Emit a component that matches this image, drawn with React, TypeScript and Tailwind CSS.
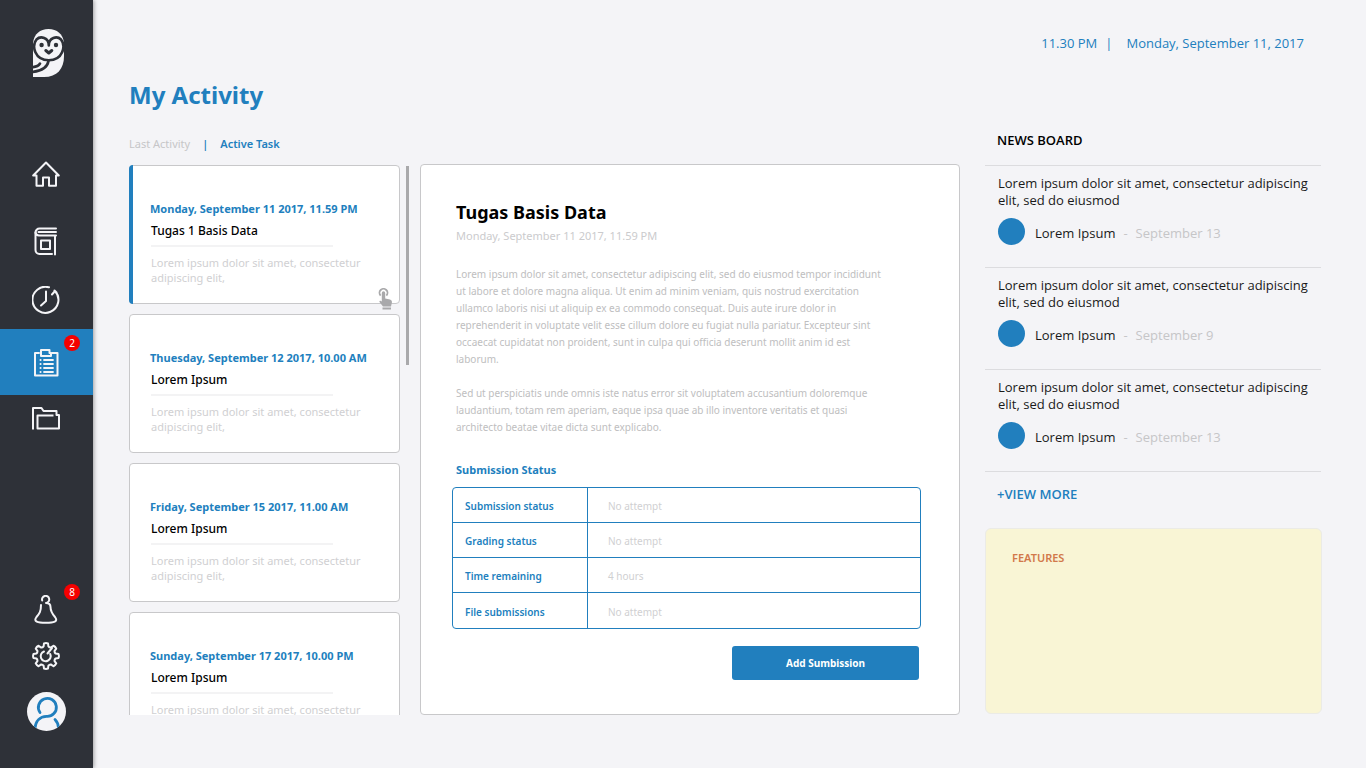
import React from "react";

const strokeProps = {
  fill: "none",
  stroke: "currentColor",
  strokeWidth: 2,
  strokeLinecap: "round" as const,
  strokeLinejoin: "round" as const,
};

function OwlLogo() {
  return (
    <svg width="31" height="48" viewBox="0 0 31 48" aria-hidden="true">
      <path d="M0 14C1 5 7 0 15.500 0S30 5 31 14V27C31 40 24 48 11 48H0Z" fill="#f4f4f7" />
      <g fill="none" stroke="#2e3138" strokeWidth="2.600" strokeLinecap="round" strokeLinejoin="round">
        <path d="M15.800 16.500C15.800 8.500 7.500 6.500 3.500 10.500C-1.500 17 1.500 31 15.800 31.300C30 31 33 17 28 10.500C24 6.500 15.800 8.500 15.800 16.500" />
        <path d="M15.500 32C14.500 38 9 42 -1 43" />
        <path d="M7 34.500C5.500 37 3 38 -1 38.200" />
        <path d="M12.800 21.500L15.800 24L18.800 21.500" strokeWidth="3" />
      </g>
      <circle cx="8.600" cy="16" r="2.200" fill="#2e3138" />
      <circle cx="23" cy="16" r="2.200" fill="#2e3138" />
    </svg>
  );
}

function HomeIcon() {
  return (
    <svg width="28" height="26" viewBox="0 0 28 26" {...strokeProps} aria-hidden="true">
      <path d="M14 1.500L1.200 14.500H4.500V24.800H11V16.500H17V24.800H24V14.500H26.800Z" />
    </svg>
  );
}

function BookIcon() {
  return (
    <svg width="26" height="30" viewBox="0 0 26 30" {...strokeProps} aria-hidden="true">
      <path d="M23 2.500H6.500A4 4 0 0 0 2.500 6.500V24A4 4 0 0 0 6.500 28H19" />
      <path d="M23 6H5.500M23 9.500H6A3.500 3.500 0 0 1 2.500 6.500M22 9.500V28.500" />
      <path d="M8 14.500H17V23H8Z" />
    </svg>
  );
}

function ClockIcon() {
  return (
    <svg width="28" height="28" viewBox="0 0 28 28" {...strokeProps} aria-hidden="true">
      <path d="M17 1.300A13 13 0 1 0 23 5L20 8.500M22.500 4.500L24.500 6.500" />
      <path d="M14 5.500V15L9 19.500" />
    </svg>
  );
}

function ClipboardIcon() {
  return (
    <svg width="26" height="29" viewBox="0 0 26 29" {...strokeProps} aria-hidden="true">
      <path d="M6 5H2V27.500H24.500V5H19" />
      <path d="M8 8V2H16.500V5H18V8Z" />
      <path d="M11 12H20M11 16H20M11 20H20M11 24H20" strokeWidth="1.800" />
      <path d="M7.500 12H7.600M7.500 16H7.600M7.500 20H7.600M7.500 24H7.600" />
    </svg>
  );
}

function FolderIcon() {
  return (
    <svg width="28" height="23" viewBox="0 0 28 23" {...strokeProps} strokeLinecap="square" aria-hidden="true">
      <path d="M1 21.500V1H9.500L11.500 4H24.500V8H27V21.500H5.500V8.500H20.500" />
    </svg>
  );
}

function BellIcon() {
  return (
    <svg width="26" height="29" viewBox="0 0 26 29" {...strokeProps} aria-hidden="true">
      <path d="M9.200 5.500A3.600 3.600 0 1 1 13 8C16 8 17.500 9.500 17.500 12C17.500 16.500 19 18.500 22 22C25.500 26.500 21 27.800 12.800 27.800S0 26.500 3.500 22C6.500 18.500 8 16.500 8 10" />
    </svg>
  );
}

function GearIcon() {
  const teeth = Array.from({ length: 8 }, (_, i) => {
    const at = (radius: number, deg: number) => {
      const a = ((i * 45 + deg - 90) * Math.PI) / 180;
      return `${(14 + radius * Math.cos(a)).toFixed(2)} ${(14 + radius * Math.sin(a)).toFixed(2)}`;
    };
    return `${i === 0 ? "M" : "L"}${at(10, -14)}L${at(12.7, -9)}Q${at(13.3, 0)} ${at(12.7, 9)}L${at(10, 14)}Q${at(9, 22.5)} ${at(10, 31)}`;
  }).join("");
  return (
    <svg width="28" height="28" viewBox="0 0 28 28" {...strokeProps} aria-hidden="true">
      <path d={teeth + "Z"} />
      <path d="M12 9.500A5 5 0 1 0 18.200 12M15.500 11.500L20 6" />
    </svg>
  );
}

function UserIcon() {
  return (
    <svg width="39" height="39" viewBox="0 0 39 39" aria-hidden="true">
      <defs>
        <clipPath id="avatar-disc">
          <circle cx="19.500" cy="19.500" r="19.500" />
        </clipPath>
      </defs>
      <circle cx="19.500" cy="19.500" r="19.500" fill="#f4f4f7" />
      <g clipPath="url(#avatar-disc)" fill="none" stroke="#217fbe" strokeWidth="2.800" strokeLinecap="round">
        <path d="M13 20.500A9 9 0 1 1 19.500 24.300C13 24.500 8.500 29 7.800 37" />
        <path d="M28 27.500C30 29.500 31.300 32 31.500 36" />
      </g>
    </svg>
  );
}

function TapIcon() {
  return (
    <svg width="15" height="22" viewBox="0 0 15 22" aria-hidden="true">
      <path d="M2.600 7.600A4 4 0 1 1 8.400 7.600" fill="none" stroke="#a9a9ab" strokeWidth="1.800" />
      <path
        d="M3.800 5A1.700 1.700 0 0 1 7.200 5V10.500L12 11.500Q14 12 14 14L13 18.500H5L1.500 14Q1 12.500 2.500 12.700L3.800 13.500ZM4.500 19.500H13V21.500H4.500Z"
        fill="#a9a9ab"
      />
    </svg>
  );
}

function Badge({ children }: { children: React.ReactNode }) {
  return (
    <span className="absolute top-1.5 right-[13px] flex size-4 items-center justify-center rounded-full bg-[#f50000] text-[10px] leading-none text-white">
      {children}
    </span>
  );
}

function NavButton({
  label,
  size,
  active,
  badge,
  children,
}: {
  label: string;
  size: string;
  active?: boolean;
  badge?: number;
  children: React.ReactNode;
}) {
  return (
    <button
      type="button"
      aria-label={label}
      aria-current={active ? "page" : undefined}
      className={`relative flex w-full items-center justify-center pr-px ${size} ${active ? "bg-[#217fbe]" : ""}`}
    >
      {children}
      {badge !== undefined && <Badge>{badge}</Badge>}
    </button>
  );
}

function Sidebar() {
  return (
    <aside className="z-10 flex w-[93px] shrink-0 flex-col bg-[#2e3138] pt-[29px] pb-7 text-[#f4f4f7] shadow-[1px_0_4px_rgba(0,0,0,0.35)]">
      <a href="#home" aria-label="Owl" className="flex justify-center pl-1">
        <OwlLogo />
      </a>
      <nav className="mt-[60px] flex flex-col">
        <NavButton label="Home" size="h-[74px]"><HomeIcon /></NavButton>
        <NavButton label="Courses" size="h-[60px]"><BookIcon /></NavButton>
        <NavButton label="History" size="h-[58px]"><ClockIcon /></NavButton>
        <NavButton label="Activity" size="h-[66px]" active badge={2}><ClipboardIcon /></NavButton>
        <NavButton label="Files" size="h-[46px]"><FolderIcon /></NavButton>
      </nav>
      <div className="mt-auto flex flex-col">
        <NavButton label="Notifications" size="h-[52px] pt-2.5" badge={8}><BellIcon /></NavButton>
        <NavButton label="Settings" size="h-[52px]"><GearIcon /></NavButton>
        <NavButton label="Profile" size="h-[58px]"><UserIcon /></NavButton>
      </div>
    </aside>
  );
}

const tasks = [
  { date: "Monday, September 11 2017, 11.59 PM", title: "Tugas 1 Basis Data" },
  { date: "Thuesday, September 12 2017, 10.00 AM", title: "Lorem Ipsum" },
  { date: "Friday, September 15 2017, 11.00 AM", title: "Lorem Ipsum" },
  { date: "Sunday, September 17 2017, 10.00 PM", title: "Lorem Ipsum" },
];

const statusRows = [
  ["Submission status", "No attempt"],
  ["Grading status", "No attempt"],
  ["Time remaining", "4 hours"],
  ["File submissions", "No attempt"],
];

const news = ["September 13", "September 9", "September 13"];

function TaskCard({ date, title, selected }: { date: string; title: string; selected: boolean }) {
  return (
    <article className="relative h-[139px] shrink-0 rounded border border-[#c8c8ca] bg-white pt-[33px] pl-5">
      {selected && <span className="absolute -inset-y-px -left-px w-1 rounded-l bg-[#217fbe]" />}
      <p className="text-[11px] leading-5 font-bold whitespace-nowrap text-[#217fbe]">{date}</p>
      <h2 className="pl-px text-[12px] leading-6 font-medium text-black">{title}</h2>
      <hr className="mt-0.5 ml-px w-[182px] border-t-2 border-[#f3f3f4]" />
      <p className="mt-2 ml-px w-[215px] text-[11px] leading-[15px] text-[#d0d0d2]">
        Lorem ipsum dolor sit amet, consectetur adipiscing elit,
      </p>
      {selected && (
        <span className="absolute right-1.5 -bottom-[7px]">
          <TapIcon />
        </span>
      )}
    </article>
  );
}

function TaskDetail() {
  return (
    <section className="rounded border border-[#c8c8ca] bg-white pt-[35px] pr-[38px] pb-[33px] pl-[31px]">
      <div className="pl-1">
        <h2 className="text-[18px] leading-6 font-bold text-black">Tugas Basis Data</h2>
        <p className="mt-0.5 text-[11px] leading-5 text-[#cbcbcd]">Monday, September 11 2017, 11.59 PM</p>
        <div className="mt-5 flex max-w-[430px] flex-col gap-[17px] text-[10px] leading-[17px] text-[#bebec0]">
          <p>
            Lorem ipsum dolor sit amet, consectetur adipiscing elit, sed do eiusmod tempor incididunt ut labore et
            dolore magna aliqua. Ut enim ad minim veniam, quis nostrud exercitation ullamco laboris nisi ut aliquip ex
            ea commodo consequat. Duis aute irure dolor in reprehenderit in voluptate velit esse cillum dolore eu
            fugiat nulla pariatur. Excepteur sint occaecat cupidatat non proident, sunt in culpa qui officia deserunt
            mollit anim id est laborum.
          </p>
          <p>
            Sed ut perspiciatis unde omnis iste natus error sit voluptatem accusantium doloremque laudantium, totam rem
            aperiam, eaque ipsa quae ab illo inventore veritatis et quasi architecto beatae vitae dicta sunt explicabo.
          </p>
        </div>
        <h3 className="mt-6 text-[11px] leading-5 font-bold text-[#217fbe]">Submission Status</h3>
      </div>
      <table className="mt-[7px] w-full border-separate border-spacing-0 rounded border border-[#217fbe] text-[10px] leading-4">
        <tbody>
          {statusRows.map(([name, value], i) => {
            const line = i < statusRows.length - 1 ? "border-b border-[#217fbe]" : "";
            return (
              <tr key={name}>
                <th
                  scope="row"
                  className={`h-[35px] w-[135px] border-r border-[#217fbe] pt-0.5 pl-3 text-left font-semibold text-[#217fbe] ${line}`}
                >
                  {name}
                </th>
                <td className={`pt-0.5 pl-5 text-[#d0d0d2] ${line}`}>{value}</td>
              </tr>
            );
          })}
        </tbody>
      </table>
      <div className="mt-[17px] flex justify-end pr-0.5">
        <button type="button" className="h-[34px] w-[187px] rounded-[3px] bg-[#217fbe] text-[10px] font-bold text-white">
          Add Sumbission
        </button>
      </div>
    </section>
  );
}

function NewsBoard() {
  return (
    <aside className="flex flex-col">
      <h2 className="pl-3 font-['Open_Sans',sans-serif] text-[13px] leading-5 font-semibold text-black">NEWS BOARD</h2>
      <div className="mt-[15px] mr-px border-b border-[#dcdcdf]">
        {news.map((date, i) => (
          <article
            key={i}
            className="border-t border-[#dcdcdf] pt-[9px] pb-[22px] pl-[13px] font-['Open_Sans',sans-serif] text-[13px] text-[#1a1a1a]"
          >
            <p className="leading-[17px]">Lorem ipsum dolor sit amet, consectetur adipiscing elit, sed do eiusmod</p>
            <div className="mt-[9px] flex items-center">
              <span className="size-[27px] rounded-full bg-[#217fbe]" />
              <p className="mt-0.5 ml-2.5 flex gap-2 leading-5">
                <span>Lorem Ipsum</span>
                <span className="text-[#c6c6c8]">-</span>
                <span className="text-[#c6c6c8]">{date}</span>
              </p>
            </div>
          </article>
        ))}
      </div>
      <a
        href="#news"
        className="mt-3 self-start pl-3 font-['Open_Sans',sans-serif] text-[13px] leading-5 font-semibold text-[#217fbe]"
      >
        +VIEW MORE
      </a>
      <section className="mt-6 mb-px flex-1 rounded-md border border-[#ebebe6] bg-[#f9f5d5] pt-[19px] pl-[26px]">
        <h2 className="text-[11px] leading-5 font-semibold text-[#d2794b]">FEATURES</h2>
      </section>
    </aside>
  );
}

export default function App() {
  return (
    <div className="flex min-h-screen bg-[#f4f4f7] font-['Noto_Sans',sans-serif]">
      <Sidebar />
      <main className="flex min-w-0 flex-1 flex-col pt-[33px] pr-11 pb-[53px] pl-9">
        <header>
          <p className="flex justify-end pr-[18px] font-['Open_Sans',sans-serif] text-[13px] leading-5 text-[#217fbe]">
            <span>11.30 PM</span>
            <span className="mr-3.5 ml-2">|</span>
            <span>Monday, September 11, 2017</span>
          </p>
          <h1 className="mt-6 text-[24px] leading-9 font-bold text-[#217fbe]">My Activity</h1>
        </header>
        <div className="mt-[17px] grid flex-1 grid-cols-[minmax(0,1fr)_337px] gap-[25px]">
          <div className="flex flex-col pt-1">
            <div className="flex items-center gap-3 text-[11px] leading-5">
              <button type="button" className="text-[#c6c6c8]">Last Activity</button>
              <span className="font-semibold text-[#217fbe]">|</span>
              <button type="button" className="font-semibold text-[#217fbe]">Active Task</button>
            </div>
            <div className="mt-2.5 grid flex-1 grid-cols-[280px_minmax(0,1fr)] gap-[11px]">
              <div className="flex overflow-hidden [contain:size]">
                <div className="mt-px flex min-w-0 flex-1 flex-col gap-2.5">
                  {tasks.map((task, i) => (
                    <TaskCard key={task.date} {...task} selected={i === 0} />
                  ))}
                </div>
                <div className="mt-0.5 ml-1.5 h-[199px] w-[3px] bg-[#a9a9ab]" />
              </div>
              <TaskDetail />
            </div>
          </div>
          <NewsBoard />
        </div>
      </main>
    </div>
  );
}
